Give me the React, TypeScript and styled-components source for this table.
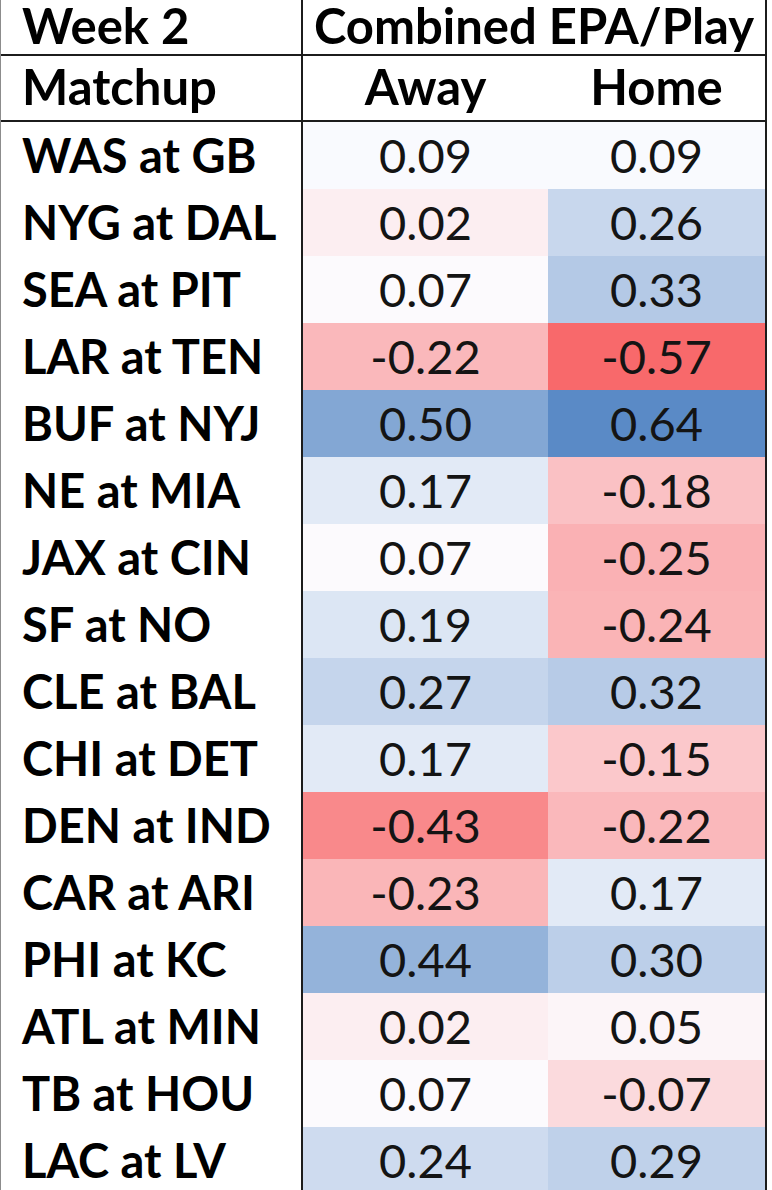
import React from 'react';
import styled, { createGlobalStyle } from 'styled-components';

const GlobalStyle = createGlobalStyle`
  html, body {
    margin: 0;
    padding: 0;
    background: #ffffff;
  }
  body {
    font-family: Lato, 'Open Sans', 'Liberation Sans', sans-serif;
    color: #000;
  }
`;

type Game = { matchup: string; away: number; home: number };

const games: Game[] = [
  { matchup: 'WAS at GB', away: 0.09, home: 0.09 },
  { matchup: 'NYG at DAL', away: 0.02, home: 0.26 },
  { matchup: 'SEA at PIT', away: 0.07, home: 0.33 },
  { matchup: 'LAR at TEN', away: -0.22, home: -0.57 },
  { matchup: 'BUF at NYJ', away: 0.5, home: 0.64 },
  { matchup: 'NE at MIA', away: 0.17, home: -0.18 },
  { matchup: 'JAX at CIN', away: 0.07, home: -0.25 },
  { matchup: 'SF at NO', away: 0.19, home: -0.24 },
  { matchup: 'CLE at BAL', away: 0.27, home: 0.32 },
  { matchup: 'CHI at DET', away: 0.17, home: -0.15 },
  { matchup: 'DEN at IND', away: -0.43, home: -0.22 },
  { matchup: 'CAR at ARI', away: -0.23, home: 0.17 },
  { matchup: 'PHI at KC', away: 0.44, home: 0.3 },
  { matchup: 'ATL at MIN', away: 0.02, home: 0.05 },
  { matchup: 'TB at HOU', away: 0.07, home: -0.07 },
  { matchup: 'LAC at LV', away: 0.24, home: 0.29 },
];

// excel style 3 colour scale: min red, 50th percentile white, max blue
const RED = [248, 105, 107];
const MID = [252, 252, 255];
const BLUE = [90, 138, 198];

const all = games.flatMap((g) => [g.away, g.home]).sort((a, b) => a - b);
const lo = all[0];
const hi = all[all.length - 1];
const half = (all.length - 1) / 2;
const median =
  all[Math.floor(half)] + (all[Math.ceil(half)] - all[Math.floor(half)]) * (half - Math.floor(half));

const mix = (a: number[], b: number[], t: number) =>
  `rgb(${a.map((v, i) => Math.round(v + (b[i] - v) * t)).join(', ')})`;

const scaleColor = (v: number) =>
  v <= median ? mix(MID, RED, (median - v) / (median - lo)) : mix(MID, BLUE, (v - median) / (hi - median));

const Sheet = styled.div`
  display: grid;
  grid-template-columns: 302px 245px 217px;
  grid-template-rows: 56px 66px;
  grid-auto-rows: 67px;
  width: 767px;
  box-sizing: border-box;
  border-left: 1px solid #8c8c8c;
  border-right: 2px solid #1c1c1c;
`;

const HeadCell = styled.div<{ $span?: number; $align?: 'left' | 'center'; $divider?: boolean }>`
  grid-column: span ${(p) => p.$span || 1};
  box-sizing: border-box;
  display: flex;
  align-items: center;
  justify-content: ${(p) => (p.$align === 'center' ? 'center' : 'flex-start')};
  padding: 0 0 3px ${(p) => (p.$align === 'center' ? 0 : 21)}px;
  border-bottom: 2px solid #1c1c1c;
  border-right: ${(p) => (p.$divider ? '2px solid #1c1c1c' : 'none')};
  font-weight: 700;
  font-size: 49px;
  line-height: 1;
  white-space: nowrap;
`;

const Label = styled.div`
  box-sizing: border-box;
  display: flex;
  align-items: center;
  padding-left: 21px;
  border-right: 2px solid #1c1c1c;
  background: #fff;
  font-weight: 700;
  font-size: 47px;
  line-height: 1;
  white-space: nowrap;
`;

const Value = styled.div<{ $bg: string }>`
  display: flex;
  align-items: center;
  justify-content: center;
  background: ${(p) => p.$bg};
  color: #141414;
  font-size: 47px;
  font-weight: 400;
  line-height: 1;
`;

const fmt = (v: number) => v.toFixed(2);

const App = () => (
  <>
    <GlobalStyle />
    <Sheet>
      <HeadCell $divider>Week 2</HeadCell>
      <HeadCell $span={2} $align="center">
        Combined EPA/Play
      </HeadCell>
      <HeadCell $divider>Matchup</HeadCell>
      <HeadCell $align="center">Away</HeadCell>
      <HeadCell $align="center">Home</HeadCell>
      {games.map((g) => (
        <React.Fragment key={g.matchup}>
          <Label>{g.matchup}</Label>
          <Value $bg={scaleColor(g.away)}>{fmt(g.away)}</Value>
          <Value $bg={scaleColor(g.home)}>{fmt(g.home)}</Value>
        </React.Fragment>
      ))}
    </Sheet>
  </>
);

export default App;
